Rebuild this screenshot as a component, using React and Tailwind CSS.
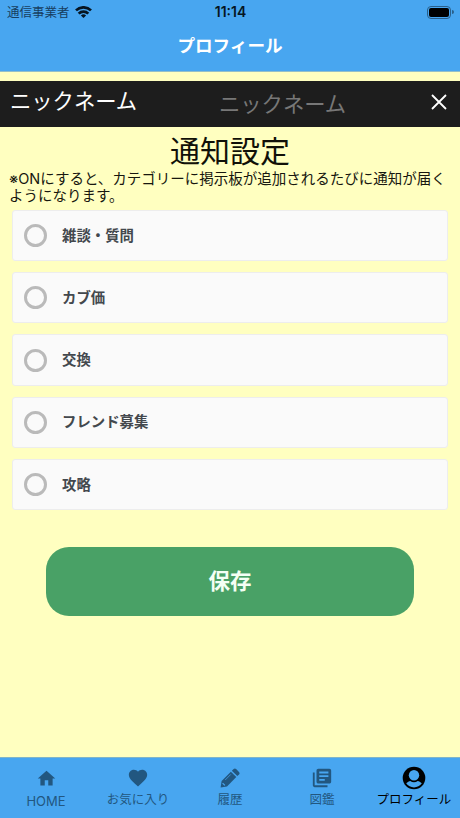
import React, { useState } from 'react';
import { MdHome, MdFavorite, MdLibraryBooks } from 'react-icons/md';

const CATEGORIES = ['雑談・質問', 'カブ価', '交換', 'フレンド募集', '攻略'];

const PencilIcon = () => (
  <svg viewBox="0 0 20 20" className="h-5 w-5" fill="none">
    <path d="M.6 19.400l1-6.400L10.900 3.700l5.400 5.400L7 18.400z" fill="currentColor" />
    <path d="M11.900 2.700l1.700-1.700a1.800 1.800 0 0 1 2.500 0l2.900 2.900a1.800 1.800 0 0 1 0 2.500l-1.700 1.700z" fill="currentColor" />
    <path d="M5.200 12l5.600-5.600" stroke="#48a6f0" strokeWidth=".7" />
    <path d="M2.600 15.100l2.300 2.300" stroke="#48a6f0" strokeWidth="1.200" />
  </svg>
);

const ProfileIcon = () => (
  <svg viewBox="0 0 24 24" className="h-6 w-6">
    <circle cx="12" cy="12" r="11.3" fill="currentColor" />
    <circle cx="12" cy="9.300" r="5.200" fill="#48a6f0" />
    <path d="M4.200 17.300c1.500-1.400 2.700-2 4.100-2.400 2.200 1.700 5.200 1.700 7.400 0 1.400.4 2.600 1 4.100 2.400a9.400 9.400 0 0 1-15.600 0z" fill="#48a6f0" />
  </svg>
);

const StatusBar = () => (
  <div className="grid h-6 grid-cols-3 items-center pl-[7px] pr-[6px]">
    <div className="flex items-center gap-[5px]">
      <span className="text-[12.5px] leading-6 text-[#173e61]">通信事業者</span>
      <svg viewBox="0 0 17 12" className="-mt-px h-3 w-[17px]" fill="none" stroke="#061522" strokeWidth="2.700">
        <path d="M1 4.400a10.700 10.700 0 0 1 15 0" />
        <path d="M3.700 7.600a6.700 6.700 0 0 1 9.600 0" />
        <path d="M8.500 12L5.900 9.600a3.700 3.700 0 0 1 5.200 0z" fill="#061522" stroke="none" />
      </svg>
    </div>
    <span className="text-center font-['Inter','Noto_Sans_CJK_JP',sans-serif] text-[14px] font-semibold leading-6 text-[#061522]">11:14</span>
    <div className="flex items-center justify-end gap-px">
      <div className="h-[13px] w-6 rounded-[4px] border border-[#2a608b] p-px">
        <div className="h-full w-full rounded-[2px] bg-black" />
      </div>
      <div className="h-1 w-[2px] rounded-r bg-[#2a608b]" />
    </div>
  </div>
);

const NicknameField = () => (
  <div className="mt-[9px] flex h-[46px] shrink-0 bg-[#1d1d1d] pl-[10px] pr-[13px]">
    <label className="w-[209px] text-[21.3px] leading-[38px] text-white">ニックネーム</label>
    <span className="flex-1 text-[21.3px] leading-[43px] text-[#777]">ニックネーム</span>
    <button aria-label="クリア" className="flex items-center pb-[5px]">
      <svg viewBox="0 0 16 16" className="h-4 w-4" stroke="white" strokeWidth="1.8">
        <path d="M1 1l14 14M15 1L1 15" />
      </svg>
    </button>
  </div>
);

const CategoryRow = ({ label, checked, onToggle }) => (
  <button
    onClick={onToggle}
    className="flex h-[51.300px] w-full items-center gap-[15px] rounded-[3px] border border-[#ededed] bg-[#fafafa] pl-[11px] text-left"
  >
    <span className={`h-[23px] w-[23px] rounded-full border-[3px] border-[#bababa] ${checked ? 'bg-[#49a166]' : ''}`} />
    <span className="pb-[2px] text-[14.400px] font-bold text-[#43484d]">{label}</span>
  </button>
);

const TabItem = ({ icon, label, active, latin }) => (
  <div className={`flex flex-1 flex-col items-center pt-[8px] ${active ? 'text-black' : 'text-[#225780]'}`}>
    <div className="flex h-6 items-center">{icon}</div>
    <span className={`whitespace-nowrap leading-[18px] ${latin ? "mt-[2px] font-['Inter',sans-serif] text-[13px]" : 'text-[12.500px]'}`}>{label}</span>
  </div>
);

const App = () => {
  const [selected, setSelected] = useState([]);

  const toggle = (label) => {
    setSelected((s) => (s.includes(label) ? s.filter((l) => l !== label) : [...s, label]));
  };

  return (
    <div className="flex h-[818px] w-[460px] flex-col overflow-hidden bg-[#ffffc0] font-['Noto_Sans_CJK_JP',sans-serif]">
      {/* Header */}
      <header className="h-[72px] shrink-0 border-b border-[#93bfc9] bg-[#48a6f0]">
        <StatusBar />
        <h1 className="text-center text-[17.600px] font-bold leading-[41px] text-white">プロフィール</h1>
      </header>

      <NicknameField />

      {/* Notification settings */}
      <main className="flex-1">
        <h2 className="h-[43px] text-center text-[30px] leading-[45px] text-[#111108]">通知設定</h2>
        <p className="h-[34px] pl-[9px] font-['Inter','Noto_Sans_CJK_JP',sans-serif] text-[14.500px] leading-[17px] text-[#17170f]">
          <span className="whitespace-nowrap">※ONにすると、カテゴリーに掲示板が追加されるたびに通知が届く</span>
          <br />
          ようになります。
        </p>
        <div className="mt-[6px] flex flex-col gap-[10.900px] px-3">
          {CATEGORIES.map((label) => (
            <CategoryRow key={label} label={label} checked={selected.includes(label)} onToggle={() => toggle(label)} />
          ))}
        </div>
        <button className="mx-auto mt-[37px] block h-[69px] w-[368px] rounded-[23px] bg-[#49a166] pb-[2px] text-[21.500px] font-bold text-[#f4fff4]">
          保存
        </button>
      </main>

      {/* Tabs */}
      <nav className="flex h-[61px] shrink-0 border-t border-[#80b5c9] bg-[#48a6f0]">
        <TabItem icon={<MdHome size={21} />} label="HOME" latin />
        <TabItem icon={<MdFavorite size={22} className="mr-px" />} label="お気に入り" />
        <TabItem icon={<PencilIcon />} label="履歴" />
        <TabItem icon={<MdLibraryBooks size={22} className="mr-px" />} label="図鑑" />
        <TabItem icon={<ProfileIcon />} label="プロフィール" active />
      </nav>
    </div>
  );
};

export default App;
